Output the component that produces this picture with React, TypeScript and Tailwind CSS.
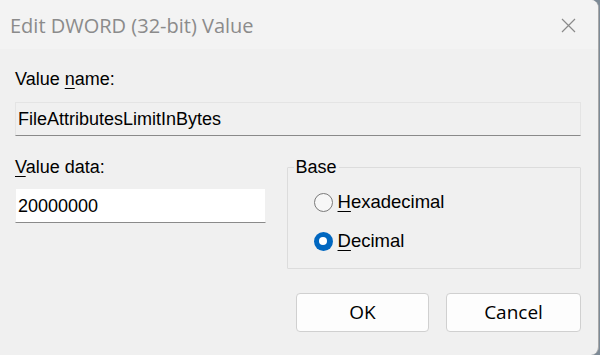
import React from "react";

function Radio({ checked }: { checked: boolean }) {
  return checked ? (
    <span className="w-[19px] h-[19px] rounded-full bg-[#0067c0] flex items-center justify-center shrink-0">
      <span className="w-[8px] h-[8px] rounded-full bg-white" />
    </span>
  ) : (
    <span className="w-[19px] h-[19px] rounded-full border border-[#7a7a7a] bg-[#f7f7f7] shrink-0" />
  );
}

export default function App() {
  const dlg = { fontFamily: '"Liberation Sans", Arial, sans-serif' };
  const seg = { fontFamily: '"Open Sans", "Noto Sans", sans-serif' };
  return (
    <div className="w-[600px] h-[355px] bg-[#7d8a96] flex overflow-hidden">
      <div className="w-[599px] h-full bg-[#f0f0f0] rounded-r-[8px] border-r border-[#a9a9a9] flex flex-col overflow-hidden">
        <div className="h-[49px] bg-[#f3f3f3] flex items-center justify-between pl-[10px] pr-[22px] shrink-0">
          <span className="text-[20px] text-[#8b8b8b] leading-[24px] mt-[2px]" style={seg}>
            Edit DWORD (32-bit) Value
          </span>
          <svg width="15" height="15" viewBox="0 0 15 15" className="mt-[1px]">
            <path d="M1 1 L14 14 M14 1 L1 14" stroke="#8a8a8a" strokeWidth="1.2" fill="none" />
          </svg>
        </div>
        <div className="flex flex-col pl-[15px] pr-[17px] text-[18px] text-black" style={dlg}>
          <div className="mt-[20px] h-[20px] leading-[20px]">
            Value <span className="underline underline-offset-[3px]">n</span>ame:
          </div>
          <div className="mt-[13px] h-[34px] bg-[#f0f0f0] border border-[#e4e4e4] border-b-[#8a8a8a] flex items-center pl-[2px] leading-[20px]">
            FileAttributesLimitInBytes
          </div>
          <div className="mt-[21px] flex">
            <div className="w-[251px] flex flex-col">
              <div className="h-[20px] leading-[20px]">
                <span className="underline underline-offset-[3px]">V</span>alue data:
              </div>
              <div className="mt-[11px] h-[35px] bg-white border border-[#f0f0f0] border-b-[#8a8a8a] flex items-center pl-[2px] leading-[20px]">
                20000000
              </div>
            </div>
            <fieldset className="ml-[21px] w-[295px] h-[112px] border border-[#dcdcdc] rounded-[1px]">
              <legend className="ml-[6px] px-[2px] leading-[20px] h-[20px]">Base</legend>
              <div className="flex flex-col pl-[26px] pt-[15px]">
                <div className="flex items-center h-[20px]">
                  <Radio checked={false} />
                  <span className="ml-[5px] leading-[20px] text-[18.5px]">
                    <span className="underline underline-offset-[3px]">H</span>exadecimal
                  </span>
                </div>
                <div className="flex items-center h-[20px] mt-[19px]">
                  <Radio checked={true} />
                  <span className="ml-[5px] leading-[20px] text-[18.5px]">
                    <span className="underline underline-offset-[3px]">D</span>ecimal
                  </span>
                </div>
              </div>
            </fieldset>
          </div>
          <div className="mt-[24px] flex justify-end gap-[17px]">
            <button className="w-[133px] h-[39px] bg-[#fdfdfd] border border-[#d0d0d0] rounded-[4px] text-[19px] text-black" style={seg}>
              OK
            </button>
            <button className="w-[135px] h-[39px] bg-[#fdfdfd] border border-[#d0d0d0] rounded-[4px] text-[19px] text-black" style={seg}>
              Cancel
            </button>
          </div>
        </div>
      </div>
    </div>
  );
}
